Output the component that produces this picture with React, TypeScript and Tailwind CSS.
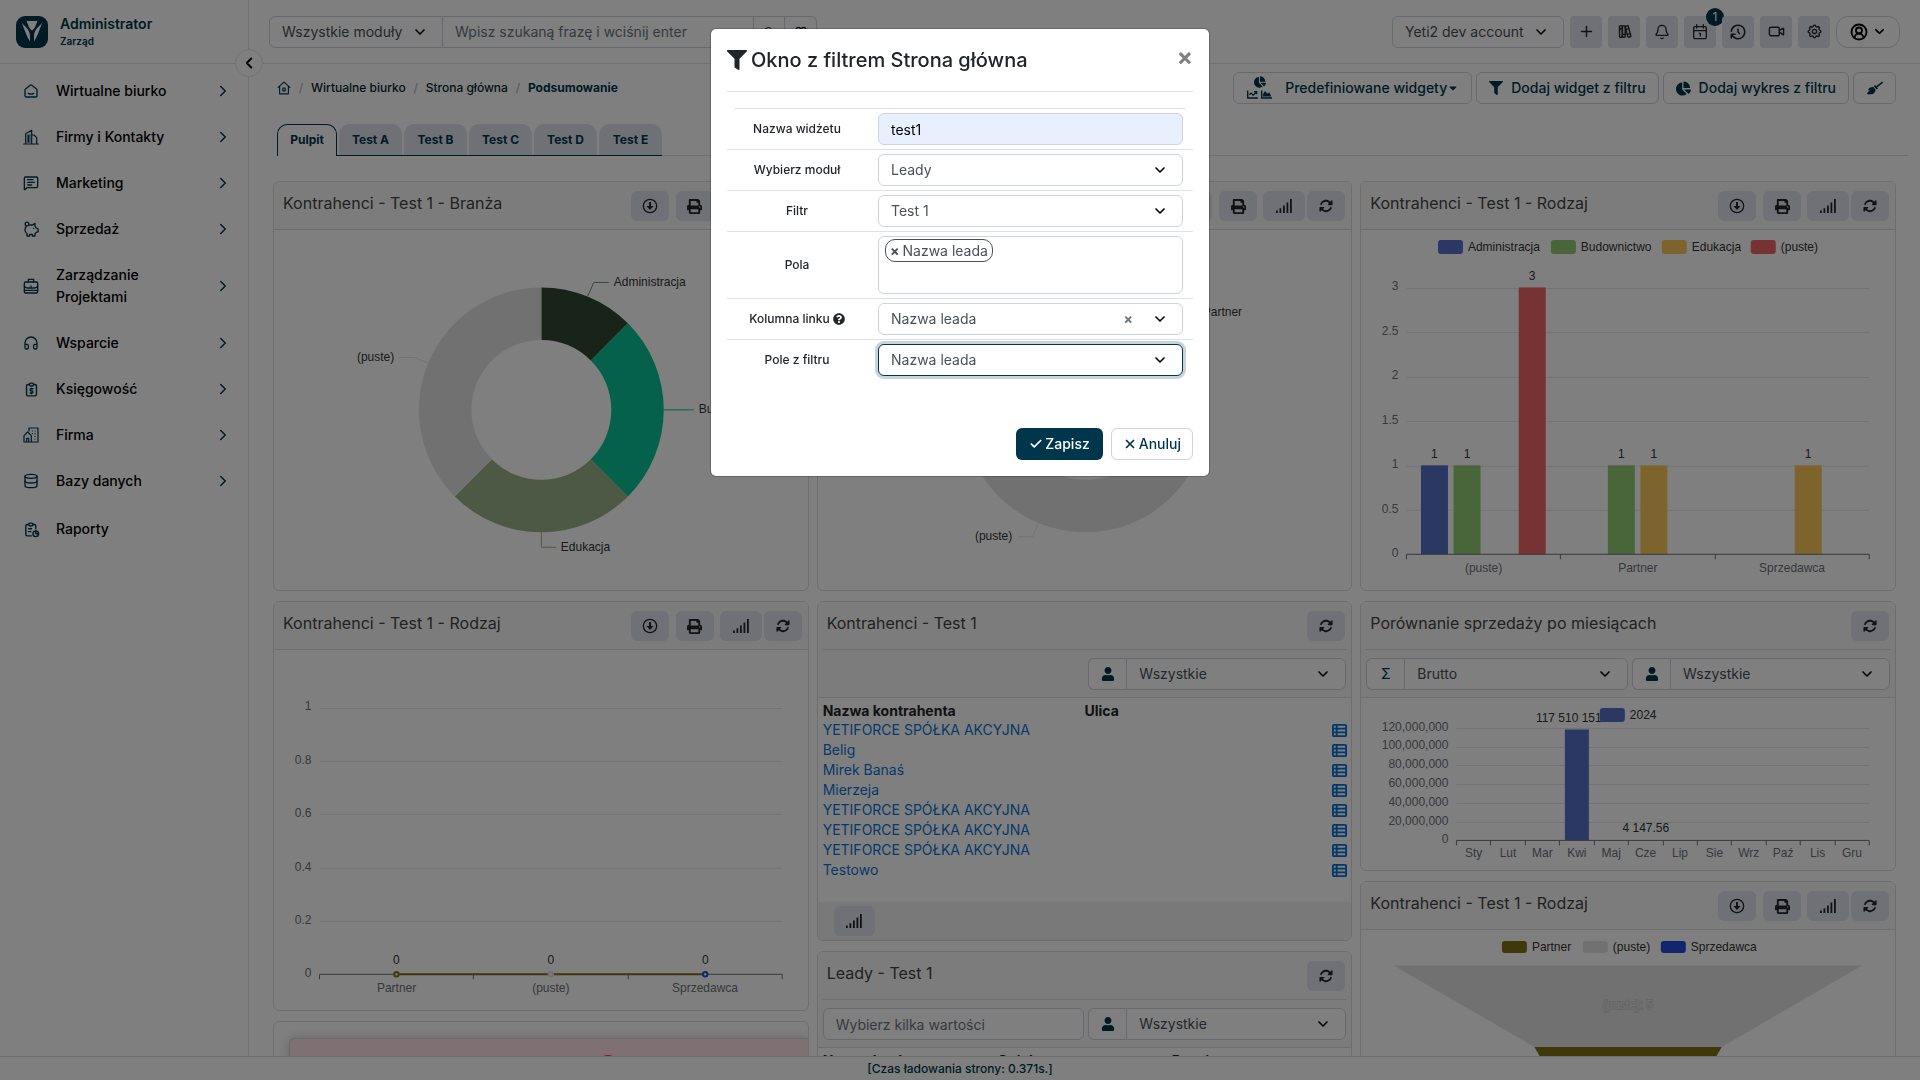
import { useState } from 'react'
import type { ReactNode } from 'react'
import { Bell, Check, ChevronDown, ChevronLeft, ChevronRight, CircleUserRound, Database, Headphones, MessageSquareText, Plus, Search, Video, X } from 'lucide-react'
import { FaBroom, FaCaretDown, FaChartArea, FaChartLine, FaChartPie, FaFilter, FaPrint, FaQuestionCircle, FaUser } from 'react-icons/fa'
import { FaRotate, FaTableList } from 'react-icons/fa6'
import { TbBooks, TbHistory, TbReport, TbReportMoney, TbSettings } from 'react-icons/tb'

const line = {
  fill: 'none',
  stroke: 'currentColor',
  strokeWidth: 2,
  strokeLinecap: 'round' as const,
  strokeLinejoin: 'round' as const,
}

function HomeSmile() {
  return (
    <svg viewBox="0 0 24 24" className="size-4" {...line}>
      <path d="M3 10.5a2 2 0 0 1 .8-1.6l7-5.4a2 2 0 0 1 2.4 0l7 5.4a2 2 0 0 1 .8 1.6V19a2 2 0 0 1-2 2H5a2 2 0 0 1-2-2z" />
      <path d="M8 15.5c2.5 1.4 5.500 1.400 8 0" />
    </svg>
  )
}

function HomeDot() {
  return (
    <svg viewBox="0 0 24 24" className="size-[14px]" {...line}>
      <path d="M2 11 12 2l10 9M4.500 9.500V22h15V9.500" />
      <rect x="10" y="12" width="4" height="5" />
    </svg>
  )
}

function Buildings() {
  return (
    <svg viewBox="0 0 24 24" className="size-4" {...line} strokeWidth={1.8}>
      <path d="M1 22.500h22M4 22V7l9-5v20M13 9h3.500l4 4v9M8.500 9v11" />
      <path d="M10.500 8v12M6.500 9v11" strokeWidth="1" />
    </svg>
  )
}

function Piggy() {
  return (
    <svg viewBox="0 0 24 24" className="size-4" {...line}>
      <circle cx="6" cy="4.500" r="2.800" />
      <path d="M10 6h4.500L18 3.500v4.200l2 2.800 2.800 1.500v4L20 17l-2 2v3.500h-4V20h-4v2.500H6V19c-2-1.500-3-3.500-3-6 0-2 .8-3.500 2-5" />
      <path d="M16 11h.1" />
    </svg>
  )
}

function Briefcase() {
  return (
    <svg viewBox="0 0 24 24" className="size-4" {...line}>
      <rect x="2" y="6" width="20" height="16.500" rx="2" />
      <path d="M8 6V2h8v4M2 12c1 2.500 3 3 5 3h10c2 0 4-.5 5-3M2 18.500h20M12 12v2" />
    </svg>
  )
}

function CompanyHouse() {
  return (
    <svg viewBox="0 0 24 24" className="size-4" {...line} strokeWidth={1.8}>
      <path d="M9 6V1.500h13.500v21h-21V13L7 7.500l5.500 5.500v9.500M5.500 22v-5h3v5" />
      <path d="M14 6h.1M18 6h.1M18 10h.1M18 14h.1M18 18h.1M14 10h.1" />
    </svg>
  )
}

function CalendarOne() {
  return (
    <svg viewBox="0 0 24 24" className="size-4" {...line}>
      <rect x="2.500" y="4" width="19" height="18" rx="2" />
      <path d="M7 1v5M17 1v5M2.500 10h19M11 14h1.500v4" />
    </svg>
  )
}

function DownloadIcon() {
  return (
    <svg viewBox="0 0 16 16" className="size-4">
      <circle cx="8" cy="8" r="6.700" fill="none" stroke="currentColor" strokeWidth="1.300" />
      <path d="M7 4h2v4h2.600L8 12 4.400 8H7z" fill="currentColor" />
    </svg>
  )
}

function BarsIcon() {
  return (
    <svg viewBox="0 0 16 16" className="size-4" fill="currentColor">
      <path d="M0 12.500h1.800V15H0zM3.500 10.200h1.800V15H3.500zM7 7.500h1.800V15H7zM10.500 4.500h1.800V15h-1.800zM14 1h1.800v14H14z" />
    </svg>
  )
}

function Logo() {
  return (
    <svg viewBox="0 0 32 32" className="size-8">
      <rect width="32" height="32" rx="9" fill="#00364b" />
      <path d="M10.500 5h11l-2.500 6c-.7 1.500-1.600 2.500-3 3.400-1.400-.9-2.300-1.900-3-3.400z" fill="#fff" />
      <path d="M6 7c3.500 4 8 7 8 13v5.500C11 21 8.500 14 6 7zM26 7c-3.500 4-8 7-8 13v5.500C21 21 23.500 14 26 7z" fill="#fff" />
    </svg>
  )
}

const menu: { label: string; icon: ReactNode; arrow?: boolean; size?: string }[] = [
  { label: 'Wirtualne biurko', icon: <HomeSmile />, arrow: true },
  { label: 'Firmy i Kontakty', icon: <Buildings />, arrow: true },
  { label: 'Marketing', icon: <MessageSquareText size={16} />, arrow: true },
  { label: 'Sprzedaż', icon: <Piggy />, arrow: true },
  { label: 'Zarządzanie Projektami', icon: <Briefcase />, arrow: true },
  { label: 'Wsparcie', icon: <Headphones size={16} />, arrow: true },
  { label: 'Księgowość', icon: <TbReportMoney size={17} />, arrow: true },
  { label: 'Firma', icon: <CompanyHouse />, arrow: true },
  { label: 'Bazy danych', icon: <Database size={16} />, arrow: true },
  { label: 'Raporty', icon: <TbReport size={17} />, size: 'py-[14px]' },
]

const tabs = ['Pulpit', 'Test A', 'Test B', 'Test C', 'Test D', 'Test E']

const accounts = [
  'YETIFORCE SPÓŁKA AKCYJNA',
  'Belig',
  'Mirek Banaś',
  'Mierzeja',
  'YETIFORCE SPÓŁKA AKCYJNA',
  'YETIFORCE SPÓŁKA AKCYJNA',
  'YETIFORCE SPÓŁKA AKCYJNA',
  'Testowo',
]

function Select({ id, label, value, className = '', selectClass = 'rounded-md border' }: { id?: string; label?: string; value: string; className?: string; selectClass?: string }) {
  return (
    <div className={`relative ${className}`}>
      <select
        id={id}
        aria-label={label}
        defaultValue={value}
        className={`h-8 w-full appearance-none border-[#cfd3df] bg-white pl-3 pr-9 text-sm text-[#495057] outline-none ${selectClass}`}
      >
        <option>{value}</option>
      </select>
      <ChevronDown size={16} strokeWidth={2.5} className="pointer-events-none absolute right-[15px] top-2 text-black" />
    </div>
  )
}

function IconSelect({ icon, value, label, className = 'flex-1' }: { icon: ReactNode; value: string; label: string; className?: string }) {
  return (
    <div className={`flex ${className}`}>
      <span className="flex h-8 w-[38px] shrink-0 items-center justify-center rounded-l-md border border-r-0 border-[#cfd3df] bg-white text-sm text-[#00364b]">
        {icon}
      </span>
      <Select label={label} value={value} className="flex-1" selectClass="rounded-r-md border" />
    </div>
  )
}

function ToolButton({ label, children, className = 'w-[38px]' }: { label: string; children: ReactNode; className?: string }) {
  return (
    <button aria-label={label} className={`flex h-[30px] items-center justify-center rounded-md bg-[#dfe2ed] text-[#212529] ${className}`}>
      {children}
    </button>
  )
}

function Widget({ title, chart, filters, className, children }: { title: string; chart?: boolean; filters?: ReactNode; className: string; children: ReactNode }) {
  return (
    <section className={`flex shrink-0 flex-col overflow-hidden rounded-md border border-[#dcdcdf] bg-white ${className}`}>
      <div className="border-b border-[#dcdcdf] bg-[#f9f9f9]">
        <div className="flex h-[47px] items-start pl-[9px] pr-[6px]">
          <h2 className="flex-1 truncate pt-[9px] text-base text-[#444]">{title}</h2>
          <div className="flex pt-[9px]">
            {chart && (
              <>
                <ToolButton label="Pobierz" className="mr-[7px] w-[38px]"><DownloadIcon /></ToolButton>
                <ToolButton label="Drukuj" className="mr-[6px] w-[38px]"><FaPrint size={15} /></ToolButton>
                <ToolButton label="Wykres" className="mr-[2px] w-[42px]"><BarsIcon /></ToolButton>
              </>
            )}
            <ToolButton label="Odśwież"><FaRotate size={14} /></ToolButton>
          </div>
        </div>
        {filters && <div className="mx-[5px] flex gap-1 border-t border-[#dcdcdf] pb-[7px] pt-2">{filters}</div>}
      </div>
      {children}
    </section>
  )
}

function Chart({ height, children }: { height: number; children: ReactNode }) {
  return (
    <svg viewBox={`0 0 534 ${height}`} className="block w-full font-['Liberation_Sans',sans-serif] text-[12px]">
      {children}
    </svg>
  )
}

function LegendItem({ x, y, color, label, height = 14 }: { x: number; y: number; color: string; label: string; height?: number }) {
  return (
    <g>
      <rect x={x} y={y - height / 2} width="25" height={height} rx="3" fill={color} />
      <text x={x + 30} y={y + 4} fill="#333">{label}</text>
    </g>
  )
}

function Axes({ left, bottom, step, ticks, categories, gap = 18 }: { left: number; bottom: number; step: number; ticks: string[]; categories: string[]; gap?: number }) {
  const right = 508.5
  const width = (right - left) / categories.length
  return (
    <g>
      {ticks.map((t, i) => (
        <g key={t}>
          {i > 0 && <path d={`M${left} ${Math.round(bottom - i * step) + 0.5}H${right}`} stroke="#e0e6f1" />}
          <text x={left - 8} y={bottom - i * step + 3} textAnchor="end" fill="#6e7079">{t}</text>
        </g>
      ))}
      {categories.map((c, i) => (
        <text key={c} x={left + width * (i + 0.5)} y={bottom + gap} textAnchor="middle" fill="#6e7079">{c}</text>
      ))}
    </g>
  )
}

function AxisLine({ left, bottom, count }: { left: number; bottom: number; count: number }) {
  const width = (508.5 - left) / count
  return (
    <g stroke="#6e7079">
      <path d={`M${left} ${bottom}H508.5`} />
      {Array.from({ length: count + 1 }, (_, i) => (
        <path key={i} d={`M${Math.floor(left + i * width) + 0.5} ${bottom}v5`} />
      ))}
    </g>
  )
}

const CX = 267.5
const CY = 180

function arc(from: number, to: number) {
  const pt = (deg: number, r: number) => {
    const a = (deg * Math.PI) / 180
    return `${CX + r * Math.sin(a)} ${CY - r * Math.cos(a)}`
  }
  const large = to - from > 180 ? 1 : 0
  return `M${pt(from, 122.5)}A122.5 122.5 0 ${large} 1 ${pt(to, 122.5)}L${pt(to, 70)}A70 70 0 ${large} 0 ${pt(from, 70)}Z`
}

function IndustryDonut() {
  return (
    <Chart height={360}>
      <path d={arc(0, 45)} fill="#304632" />
      <path d={arc(45, 135)} fill="#0ac296" />
      <path d={arc(135, 225)} fill="#9ab288" />
      <path d={arc(225, 360)} fill="#e3e3e3" />
      <g fill="none">
        <path d="M314 66l6-13.500h15" stroke="#6f8c72" />
        <path d="M390 180h30" stroke="#0ac296" />
        <path d="M267.500 302.500v15h15" stroke="#9ab288" />
        <path d="M154 133l-14-5.500h-15" stroke="#e3e3e3" />
      </g>
      <g fill="#333">
        <text x="340" y="56">Administracja</text>
        <text x="425" y="183">Budownictwo</text>
        <text x="287" y="321">Edukacja</text>
        <text x="83" y="131">(puste)</text>
      </g>
    </Chart>
  )
}

function TypeDonut() {
  return (
    <Chart height={360}>
      <path d={arc(0, 90)} fill="#7c7014" />
      <path d={arc(90, 315)} fill="#e3e3e3" />
      <path d={arc(315, 360)} fill="#244cdc" />
      <path d="M354 93l12-10h15" fill="none" stroke="#7c7014" />
      <path d="M220.500 293.500l-6 13.500h-15" fill="none" stroke="#e3e3e3" />
      <g fill="#333">
        <text x="385" y="86">Partner</text>
        <text x="157" y="310">(puste)</text>
      </g>
    </Chart>
  )
}

const typeBars = [
  { cat: 0, slot: 0, value: 1, color: '#5470c6' },
  { cat: 0, slot: 1, value: 1, color: '#91cc75' },
  { cat: 0, slot: 3, value: 3, color: '#ee6666' },
  { cat: 1, slot: 1, value: 1, color: '#91cc75' },
  { cat: 1, slot: 2, value: 1, color: '#fac858' },
  { cat: 2, slot: 2, value: 1, color: '#fac858' },
]

function TypeBarChart() {
  return (
    <Chart height={360}>
      <LegendItem x={77} y={17} color="#5470c6" label="Administracja" />
      <LegendItem x={190} y={17} color="#91cc75" label="Budownictwo" />
      <LegendItem x={301} y={17} color="#fac858" label="Edukacja" />
      <LegendItem x={390} y={17} color="#ee6666" label="(puste)" />
      <Axes left={45.5} bottom={324.5} step={44.5} ticks={['0', '0.5', '1', '1.5', '2', '2.5', '3']} categories={['(puste)', 'Partner', 'Sprzedawca']} />
      {typeBars.map((b) => {
        const x = 60 + b.cat * 154.4 + b.slot * 32.6
        const h = b.value * 89
        return (
          <g key={`${b.cat}-${b.slot}`}>
            <rect x={x} y={324.5 - h} width="27" height={h} fill={b.color} />
            <text x={x + 13.5} y={317 - h} textAnchor="middle" fill="#333">{b.value}</text>
          </g>
        )
      })}
      <AxisLine left={45.5} bottom={324.5} count={3} />
    </Chart>
  )
}

function TypeLineChart() {
  return (
    <Chart height={360}>
      <Axes left={45.5} bottom={324.5} step={53.4} ticks={['0', '0.2', '0.4', '0.6', '0.8', '1']} categories={['Partner', '(puste)', 'Sprzedawca']} />
      <AxisLine left={45.5} bottom={324.5} count={3} />
      <path d="M122.500 324.500h309" stroke="#7c7014" strokeWidth="2" />
      {[
        { x: 122.5, color: '#7c7014' },
        { x: 277, color: '#e3e3e3' },
        { x: 431.5, color: '#244cdc' },
      ].map((p) => (
        <g key={p.x}>
          <circle cx={p.x} cy="324.500" r="2.200" fill="#fff" stroke={p.color} strokeWidth="2" />
          <text x={p.x} y="314" textAnchor="middle" fill="#333">0</text>
        </g>
      ))}
    </Chart>
  )
}

function SalesChart() {
  return (
    <Chart height={172}>
      <Axes
        left={95.5}
        bottom={142.5}
        step={18.8}
        gap={17}
        ticks={['0', '20,000,000', '40,000,000', '60,000,000', '80,000,000', '100,000,000', '120,000,000']}
        categories={['Sty', 'Lut', 'Mar', 'Kwi', 'Maj', 'Cze', 'Lip', 'Sie', 'Wrz', 'Paź', 'Lis', 'Gru']}
      />
      <rect x="204" y="31.500" width="24" height="111" fill="#5470c6" />
      <text x="175" y="24" fill="#333">117 510 151</text>
      <text x="285" y="134" textAnchor="middle" fill="#333">4 147.56</text>
      <AxisLine left={95.5} bottom={142.5} count={12} />
      <LegendItem x={239} y={17} color="#5470c6" label="2024" />
    </Chart>
  )
}

function FunnelChart() {
  return (
    <Chart height={300}>
      <LegendItem x={141} y={17} height={12} color="#7c7014" label="Partner" />
      <LegendItem x={222} y={17} height={12} color="#e3e3e3" label="(puste)" />
      <LegendItem x={300} y={17} height={12} color="#244cdc" label="Sprzedawca" />
      <path d="M32.500 35.500h469L361 117H173.500z" fill="#e3e3e3" />
      <path d="M173.500 117H361l-48 82h-92z" fill="#7c7014" />
      <text x="267" y="79" textAnchor="middle" fill="#e3e3e3" stroke="#cfcfcf" strokeWidth="2" paintOrder="stroke">(puste): 5</text>
    </Chart>
  )
}

function Sidebar() {
  return (
    <aside className="relative w-[249px] shrink-0 border-r border-[#e3e3e6] bg-white">
      <div className="flex h-16 items-center gap-3 border-b border-[#e3e3e6] px-4">
        <Logo />
        <div className="font-semibold text-[#00364b]">
          <div className="text-sm leading-[18px]">Administrator</div>
          <div className="text-[10px] leading-4">Zarząd</div>
        </div>
      </div>
      <button aria-label="Zwiń menu" className="absolute -right-[15px] top-[49px] z-10 flex size-7 items-center justify-center rounded-full border border-[#e3e3e6] bg-white text-black">
        <ChevronLeft size={18} strokeWidth={2.5} />
      </button>
      <nav className="flex flex-col pt-1">
        {menu.map((m) => (
          <a key={m.label} href="#" className={`flex items-center pl-[23px] pr-4 text-sm font-medium leading-[22px] text-black ${m.size ?? 'py-3'}`}>
            <span className="flex w-[33px] shrink-0 text-[#00364b]">{m.icon}</span>
            <span className="w-[130px]">{m.label}</span>
            {m.arrow && <ChevronRight size={18} className="ml-auto text-[#00364b]" />}
          </a>
        ))}
      </nav>
    </aside>
  )
}

const quick = [
  { label: 'Dodaj', icon: <Plus size={17} /> },
  { label: 'Baza wiedzy', icon: <TbBooks size={17} /> },
  { label: 'Powiadomienia', icon: <Bell size={16} /> },
  { label: 'Kalendarz', icon: <CalendarOne />, badge: '1' },
  { label: 'Historia', icon: <TbHistory size={18} /> },
  { label: 'Spotkanie', icon: <Video size={17} /> },
  { label: 'Ustawienia', icon: <TbSettings size={17} /> },
]

function TopBar() {
  return (
    <header className="flex h-16 items-center justify-between border-b border-[#e3e3e6] px-5">
      <div className="flex text-sm">
        <Select label="Moduł" value="Wszystkie moduły" className="w-[174px]" selectClass="rounded-l-md border" />
        <input
          aria-label="Szukaj"
          placeholder="Wpisz szukaną frazę i wciśnij enter"
          className="h-8 w-[310px] border-y border-[#cfd3df] bg-white px-3 placeholder:text-[#6c757d]"
        />
        <button aria-label="Szukaj" className="flex h-8 w-8 items-center justify-center border border-[#cfd3df]"><Search size={12} /></button>
        <button aria-label="Szukanie zaawansowane" className="flex h-8 w-8 items-center justify-center rounded-r-md border border-l-0 border-[#cfd3df]">
          <svg viewBox="0 0 14 14" className="size-3" fill="none" stroke="currentColor" strokeWidth="1.500">
            <circle cx="4" cy="4" r="2.500" />
            <circle cx="10" cy="4" r="2.500" />
            <path d="M1 12h12" />
          </svg>
        </button>
      </div>
      <div className="flex items-center gap-[6px]">
        <Select label="Konto" value="Yeti2 dev account" className="w-[172px]" />
        {quick.map((q) => (
          <button key={q.label} aria-label={q.label} className="relative flex size-8 items-center justify-center rounded bg-[#dfe2ed] text-[#212529]">
            {q.icon}
            {q.badge && (
              <span className="absolute -right-2 -top-2 flex size-[18px] items-center justify-center rounded-full bg-[#00364b] text-xs text-white">{q.badge}</span>
            )}
          </button>
        ))}
        <button aria-label="Profil" className="flex h-8 w-16 items-center justify-center gap-1 rounded-xl border border-[#cfd3df] text-black">
          <CircleUserRound size={18} strokeWidth={2.5} />
          <ChevronDown size={15} strokeWidth={2.5} />
        </button>
      </div>
    </header>
  )
}

function Toolbar() {
  const button = 'flex h-8 items-center rounded-md border border-[#cfd3df] px-3 text-sm font-medium text-[#00364b]'
  return (
    <div className="flex items-start justify-between">
      <nav aria-label="Ścieżka" className="flex h-8 items-center pl-1 text-xs font-medium text-[#001f2b]">
        <a href="#" aria-label="Start" className="text-[#00364b]"><HomeDot /></a>
        <span className="w-5 text-center text-[#b5b8c0]">/</span>
        <a href="#">Wirtualne biurko</a>
        <span className="w-5 text-center text-[#b5b8c0]">/</span>
        <a href="#">Strona główna</a>
        <span className="w-5 text-center text-[#b5b8c0]">/</span>
        <a href="#" className="font-bold text-[#00364b]">Podsumowanie</a>
      </nav>
      <div className="flex gap-1">
        <button className={button}>
          <span className="mr-3 flex w-[27px] flex-wrap justify-center gap-x-[3px] gap-y-[1px]">
            <FaChartPie size={12} />
            <span className="flex gap-[3px]"><FaChartLine size={11} /><FaChartArea size={11} /></span>
          </span>
          Predefiniowane widgety
          <FaCaretDown size={12} />
        </button>
        <button className={button}><FaFilter size={14} className="mr-2" />Dodaj widget z filtru</button>
        <button className={button}><FaChartPie size={15} className="mr-2" />Dodaj wykres z filtru</button>
        <button aria-label="Wyczyść" className={`${button} w-[43px] justify-center`}><FaBroom size={16} /></button>
      </div>
    </div>
  )
}

function Tabs() {
  return (
    <div className="-mr-3 ml-1 mt-5 flex items-end">
      <div className="flex text-xs font-bold text-[#00364b]">
        {tabs.map((t, i) => (
          <div key={t} className={i === 0 ? '' : 'border-b border-[#00364b] pl-[2px]'}>
            <button
              className={
                i === 0
                  ? 'block h-8 w-[60px] rounded-t-[10px] border border-b-0 border-[#00364b] pb-[2px]'
                  : 'block h-[31px] w-[63px] rounded-t-[10px] bg-[#dfe2ed]'
              }
            >
              {t}
            </button>
          </div>
        ))}
      </div>
      <div className="flex-1 border-b border-[#dcdcdf]" />
    </div>
  )
}

const person = <FaUser size={14} />

function Dashboard() {
  return (
    <div className="mt-[25px] grid grid-cols-3 items-start gap-2">
      <div className="flex min-w-0 flex-col gap-[10px]">
        <Widget title="Kontrahenci - Test 1 - Branża" chart className="h-[410px]"><IndustryDonut /></Widget>
        <Widget title="Kontrahenci - Test 1 - Rodzaj" chart className="h-[410px]"><TypeLineChart /></Widget>
        <section className="h-[200px] overflow-hidden rounded-md border border-[#dcdcdf] pl-[15px] pt-4">
          <div className="flex h-40 justify-center rounded-tl-md border border-r-0 border-[#cfd3d8] bg-[#ffe3e6] pt-4 shadow-[0_0_12px_rgba(0,0,0,0.2)]">
            <span className="ml-[118px] size-5 rounded-full bg-[#e53945]" />
          </div>
        </section>
      </div>

      <div className="flex min-w-0 flex-col gap-[10px]">
        <Widget title="Kontrahenci - Test 1 - Rodzaj" chart className="h-[410px]"><TypeDonut /></Widget>
        <Widget
          title="Kontrahenci - Test 1"
          className="h-[340px]"
          filters={<IconSelect className="ml-auto w-[258px]" icon={person} label="Użytkownik" value="Wszystkie" />}
        >
          <div className="flex-1 px-[5px] pt-1">
            <table className="w-full text-sm leading-5">
              <thead>
                <tr className="text-left leading-[18px] text-[#212529]">
                  <th className="w-1/2 p-0 font-bold">Nazwa kontrahenta</th>
                  <th className="p-0 font-bold">Ulica</th>
                  <th className="p-0" />
                </tr>
              </thead>
              <tbody>
                {accounts.map((a, i) => (
                  <tr key={i}>
                    <td className="p-0"><a href="#" className="text-[#0a73d6]">{a}</a></td>
                    <td className="p-0" />
                    <td className="p-0"><a href="#" aria-label="Szczegóły" className="-mr-px flex justify-end text-[#0a73d6]"><FaTableList size={15} /></a></td>
                  </tr>
                ))}
              </tbody>
            </table>
          </div>
          <div className="flex h-[38px] items-center bg-[#f3f3f3] px-4">
            <ToolButton label="Wykres" className="w-[41px]"><BarsIcon /></ToolButton>
          </div>
        </Widget>
        <Widget
          title="Leady - Test 1"
          className="h-[340px]"
          filters={
            <>
              <input aria-label="Wartości" placeholder="Wybierz kilka wartości" className="h-8 min-w-0 flex-1 rounded-md border border-[#cfd3df] bg-white px-3 text-sm placeholder:text-[#6c757d]" />
              <IconSelect className="w-[258px]" icon={person} label="Użytkownik" value="Wszystkie" />
            </>
          }
        >
          <div className="px-[5px] pt-1">
            <table className="w-full table-fixed text-left text-sm leading-[18px] text-[#212529]">
              <thead>
                <tr>
                  <th className="p-0 font-bold">Nazwa leada</th>
                  <th className="p-0 font-bold">Opiekun</th>
                  <th className="p-0 font-bold">Branża</th>
                </tr>
              </thead>
            </table>
          </div>
        </Widget>
      </div>

      <div className="flex min-w-0 flex-col gap-[10px]">
        <Widget title="Kontrahenci - Test 1 - Rodzaj" chart className="h-[410px]"><TypeBarChart /></Widget>
        <Widget
          title="Porównanie sprzedaży po miesiącach"
          className="h-[270px]"
          filters={
            <>
              <IconSelect icon="Σ" label="Kwota" value="Brutto" />
              <IconSelect className="w-[258px]" icon={person} label="Użytkownik" value="Wszystkie" />
            </>
          }
        >
          <SalesChart />
        </Widget>
        <Widget title="Kontrahenci - Test 1 - Rodzaj" chart className="h-[410px]"><FunnelChart /></Widget>
      </div>
    </div>
  )
}

function Row({ id, label, help, first, children }: { id: string; label: string; help?: boolean; first?: boolean; children: ReactNode }) {
  return (
    <div className={`flex items-center border-t border-[#dee2e6] py-1 ${first ? 'mx-[7px]' : 'px-[7px]'}`}>
      <label htmlFor={id} className="flex w-[126px] items-center justify-center gap-[3px] text-xs font-medium text-[#212529]">
        {label}
        {help && <FaQuestionCircle size={12} />}
      </label>
      <div className="relative ml-[18px] mr-[3px] flex-1">{children}</div>
    </div>
  )
}

function FilterModal() {
  const [name, setName] = useState('test1')
  return (
    <div className="fixed inset-0 z-20 flex items-start justify-center bg-black/50 pt-7">
      <div role="dialog" aria-modal="true" aria-labelledby="modal-title" className="w-[500px] rounded-md border border-black/20 bg-white bg-clip-padding p-4">
        <div className="mb-4 flex h-[47px] items-start border-b border-[#dee2e6]">
          <FaFilter size={20} className="mr-1 mt-[5px] text-[#212529]" />
          <h1 id="modal-title" className="text-xl font-medium leading-[30px] text-[#212529]">Okno z filtrem Strona główna</h1>
          <button aria-label="Zamknij" className="ml-auto text-2xl font-bold leading-6 text-[#7f7f7f]">×</button>
        </div>
        <form onSubmit={(e) => e.preventDefault()}>
          <Row id="name" label="Nazwa widżetu" first>
            <input
              id="name"
              value={name}
              onChange={(e) => setName(e.target.value)}
              className="block h-8 w-full rounded-md border border-[#cfd3df] bg-[#e8f0fe] px-3 text-sm text-black outline-none"
            />
          </Row>
          <Row id="module" label="Wybierz moduł">
            <Select id="module" value="Leady" />
          </Row>
          <Row id="filter" label="Filtr">
            <Select id="filter" value="Test 1" />
          </Row>
          <Row id="fields" label="Pola">
            <div className="flex h-[58px] items-start rounded-md border border-[#cfd3df] px-[6px] py-[2px] text-sm text-[#495057]">
              <span className="flex h-[23px] items-center gap-[3px] rounded-[10px] border border-[#495057] px-1">
                <button type="button" aria-label="Usuń" className="font-bold leading-4">×</button>
                Nazwa leada
              </span>
              <input id="fields" className="w-10 flex-1 outline-none" />
            </div>
          </Row>
          <Row id="link" label="Kolumna linku" help>
            <Select id="link" value="Nazwa leada" />
            <button type="button" aria-label="Wyczyść" className="absolute right-[50px] top-2 text-sm font-bold leading-4 text-[#6c757d]">×</button>
          </Row>
          <Row id="field" label="Pole z filtru">
            <Select id="field" value="Nazwa leada" selectClass="rounded-md border border-[#00364b]! ring-3 ring-[#c8d4d9]" />
          </Row>
          <div className="mt-12 flex justify-end gap-2">
            <button className="flex h-8 items-center gap-[2px] rounded-md bg-[#00364b] px-[13px] text-sm font-medium text-white"><Check size={14} strokeWidth={3} />Zapisz</button>
            <button type="button" className="flex h-8 items-center gap-[2px] rounded-md border border-[#cfd3df] px-[11px] text-sm font-medium text-[#00364b]"><X size={14} strokeWidth={3} />Anuluj</button>
          </div>
        </form>
      </div>
    </div>
  )
}

export default function App() {
  return (
    <div className="flex h-screen flex-col overflow-hidden bg-white font-['Inter',sans-serif] text-[#212529]">
      <div className="flex min-h-0 flex-1">
        <Sidebar />
        <main className="min-w-0 flex-1 overflow-hidden">
          <TopBar />
          <div className="px-6 pt-2">
            <Toolbar />
            <Tabs />
            <Dashboard />
          </div>
        </main>
      </div>
      <footer className="h-6 shrink-0 border-t border-[#dcdcdf] bg-white text-center text-xs font-medium leading-6 text-[#00364b]">
        [Czas ładowania strony: 0.371s.]
      </footer>
      <FilterModal />
    </div>
  )
}
